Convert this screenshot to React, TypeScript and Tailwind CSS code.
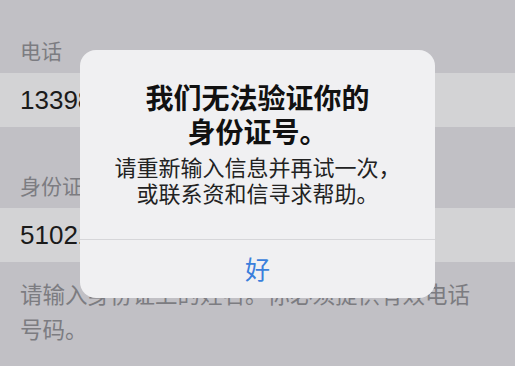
export default function App() {
  const cjk = "font-['Noto_Sans_CJK_SC','Noto_Sans',sans-serif]"
  return (
    <div className={`relative w-[515px] h-[366px] overflow-hidden bg-[#c1c0c5] ${cjk}`}>
      {/* form behind the alert */}
      <div className="h-[73px] pt-[36px] px-5 text-[21px] leading-[28px] text-[#7c7c81]">电话</div>
      <div className="h-[54px] flex items-center px-5 bg-[#d3d3d5] text-[26px] text-[#1a1a1a] font-['Liberation_Sans',sans-serif]">
        13398765432
      </div>
      <div className="h-[81px] pt-[44px] px-5 text-[21px] leading-[28px] text-[#7c7c81]">身份证号</div>
      <div className="h-[54px] flex items-center px-5 bg-[#d3d3d5] text-[26px] text-[#1a1a1a] font-['Liberation_Sans',sans-serif]">
        510211199001011234
      </div>
      <p className="pt-[14px] pl-5 pr-9 text-[22.5px] leading-[35px] text-[#7c7c81]">
        请输入身份证上的姓名。你必须提供有效电话号码。
      </p>

      {/* alert */}
      <div className="absolute left-[80px] top-[50px] w-[355px] h-[248px] rounded-[16px] bg-[#f0f0f2] flex flex-col">
        <div className="pt-[30px] text-center text-[28px] leading-[34px] font-bold text-[#111] whitespace-nowrap">
          我们无法验证你的
          <br />
          身份证号。
        </div>
        <div className="mt-[5px] text-center text-[22px] leading-[26px] text-[#222] whitespace-nowrap">
          请重新输入信息并再试一次，
          <br />
          或联系资和信寻求帮助。
        </div>
        <div className="mt-auto h-[59px] border-t border-[#d6d6d9] flex items-center justify-center text-[25px] text-[#3a7fdc]">
          好
        </div>
      </div>
    </div>
  )
}
